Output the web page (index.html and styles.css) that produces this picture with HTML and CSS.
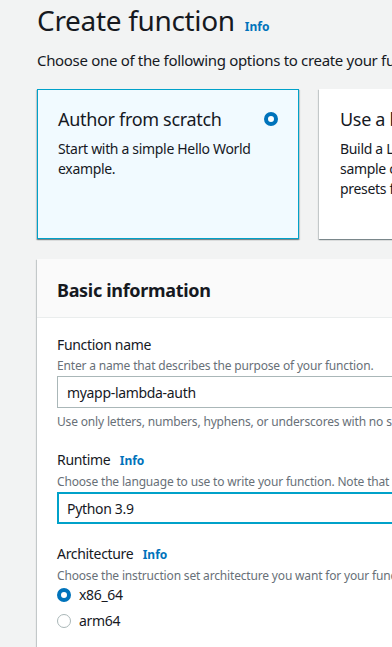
FILE: index.html
```html
<!DOCTYPE html>
<html>
<head>
<meta charset="utf-8">
<link rel="stylesheet" href="styles.css">
</head>
<body>
<div class="page">
  <h1 class="title">Create function <a class="info info-sm">Info</a></h1>
  <p class="lead">Choose one of the following options to create your function.</p>
  <div class="tiles">
    <div class="tile selected">
      <div class="tile-head">
        <span class="tile-title">Author from scratch</span>
        <span class="radio on"></span>
      </div>
      <p class="tile-desc">Start with a simple Hello World example.</p>
    </div>
    <div class="tile">
      <div class="tile-head">
        <span class="tile-title">Use a blueprint</span>
        <span class="radio"></span>
      </div>
      <p class="tile-desc">Build a Lambda application from sample code and configuration presets for common use cases.</p>
    </div>
  </div>
  <section class="panel">
    <div class="panel-head"><h2>Basic information</h2></div>
    <div class="panel-body">
      <div class="field">
        <div class="label">Function name</div>
        <div class="desc">Enter a name that describes the purpose of your function.</div>
        <div class="input">myapp-lambda-auth</div>
        <div class="hint">Use only letters, numbers, hyphens, or underscores with no spaces.</div>
      </div>
      <div class="field">
        <div class="label">Runtime <a class="info">Info</a></div>
        <div class="desc">Choose the language to use to write your function. Note that the console code editor supports only Node.js, Python, and Ruby.</div>
        <div class="input focus">Python 3.9</div>
      </div>
      <div class="field">
        <div class="label">Architecture <a class="info">Info</a></div>
        <div class="desc">Choose the instruction set architecture you want for your function code.</div>
        <div class="options">
          <label class="opt"><span class="radio on"></span>x86_64</label>
          <label class="opt"><span class="radio"></span>arm64</label>
        </div>
      </div>
    </div>
  </section>
</div>
</body>
</html>
```

FILE: styles.css
```css
html, body { margin: 0; padding: 0; }
body {
  background: #f2f3f3;
  font-family: "Noto Sans", "Open Sans", sans-serif;
  color: #16191f;
  letter-spacing: -0.02em;
  overflow: hidden;
  width: 392px;
  height: 647px;
}
.page {
  width: 900px;
  padding: 0 0 0 37px;
}
.title {
  margin: 0;
  padding-top: 1px;
  font-size: 28px;
  font-weight: 400;
  line-height: 38px;
  display: flex;
  align-items: baseline;
  gap: 10px;
}
.info {
  color: #0073bb;
  font-weight: 700;
  font-size: 12px;
  letter-spacing: 0;
  margin-left: 8px;
}
.info-sm { font-size: 12px; margin-left: 0; }
.lead {
  margin: 3px 0 0;
  font-size: 15px;
  line-height: 22px;
}
.tiles {
  display: grid;
  grid-template-columns: 262px 262px;
  gap: 20px;
  margin-top: 18px;
}
.tile {
  background: #fff;
  height: 150px;
  box-sizing: border-box;
  padding: 17px 20px;
  border: 1px solid #fff;
  box-shadow: 0 1px 1px 0 rgba(0,28,36,.3), 1px 1px 1px 0 rgba(0,28,36,.15), -1px 1px 1px 0 rgba(0,28,36,.15);
}
.tile.selected {
  background: #f1faff;
  border-color: #00a1c9;
}
.tile-head {
  display: flex;
  justify-content: space-between;
  align-items: center;
}
.tile-title {
  font-size: 18px;
  line-height: 24px;
}
.tile-desc {
  margin: 8px 0 0;
  font-size: 14px;
  line-height: 20px;
}
.radio {
  width: 14px;
  height: 14px;
  box-sizing: border-box;
  border-radius: 50%;
  border: 1px solid #aab7b8;
  background: #fff;
  flex: none;
}
.radio.on {
  border: 4px solid #0073bb;
  background: #fff;
}
.panel {
  margin-top: 20px;
  background: #fff;
  box-shadow: 0 1px 1px 0 rgba(0,28,36,.3), 1px 1px 1px 0 rgba(0,28,36,.15), -1px 1px 1px 0 rgba(0,28,36,.15);
}
.panel-head {
  background: #fafafa;
  border-bottom: 1px solid #eaeded;
  height: 59px;
  box-sizing: border-box;
  padding: 4px 20px 0;
  display: flex;
  align-items: center;
}
.panel-head h2 {
  margin: 0;
  font-size: 18px;
  font-weight: 700;
  line-height: 24px;
}
.panel-body {
  padding: 16px 20px 30px;
}
.field { margin-bottom: 19px; }
.label {
  font-size: 14px;
  line-height: 22px;
}
.label .info { margin-left: 6px; }
.desc, .hint {
  font-size: 12px;
  line-height: 16px;
  color: #687078;
  letter-spacing: -0.17px;
  white-space: nowrap;
}
.desc { margin-top: 2px; }
.input {
  margin-top: 2px;
  height: 32px;
  box-sizing: border-box;
  border: 1px solid #aab7b8;
  padding: 0 9px;
  display: flex;
  align-items: center;
  font-size: 14px;
}
.input.focus {
  border: 2px solid #00a1c9;
  padding: 0 8px;
}
.hint { margin-top: 6px; }
.options {
  margin-top: 1px;
  display: flex;
  flex-direction: column;
  gap: 6px;
}
.opt {
  display: flex;
  align-items: center;
  gap: 8px;
  font-size: 14px;
  line-height: 20px;
}
```
